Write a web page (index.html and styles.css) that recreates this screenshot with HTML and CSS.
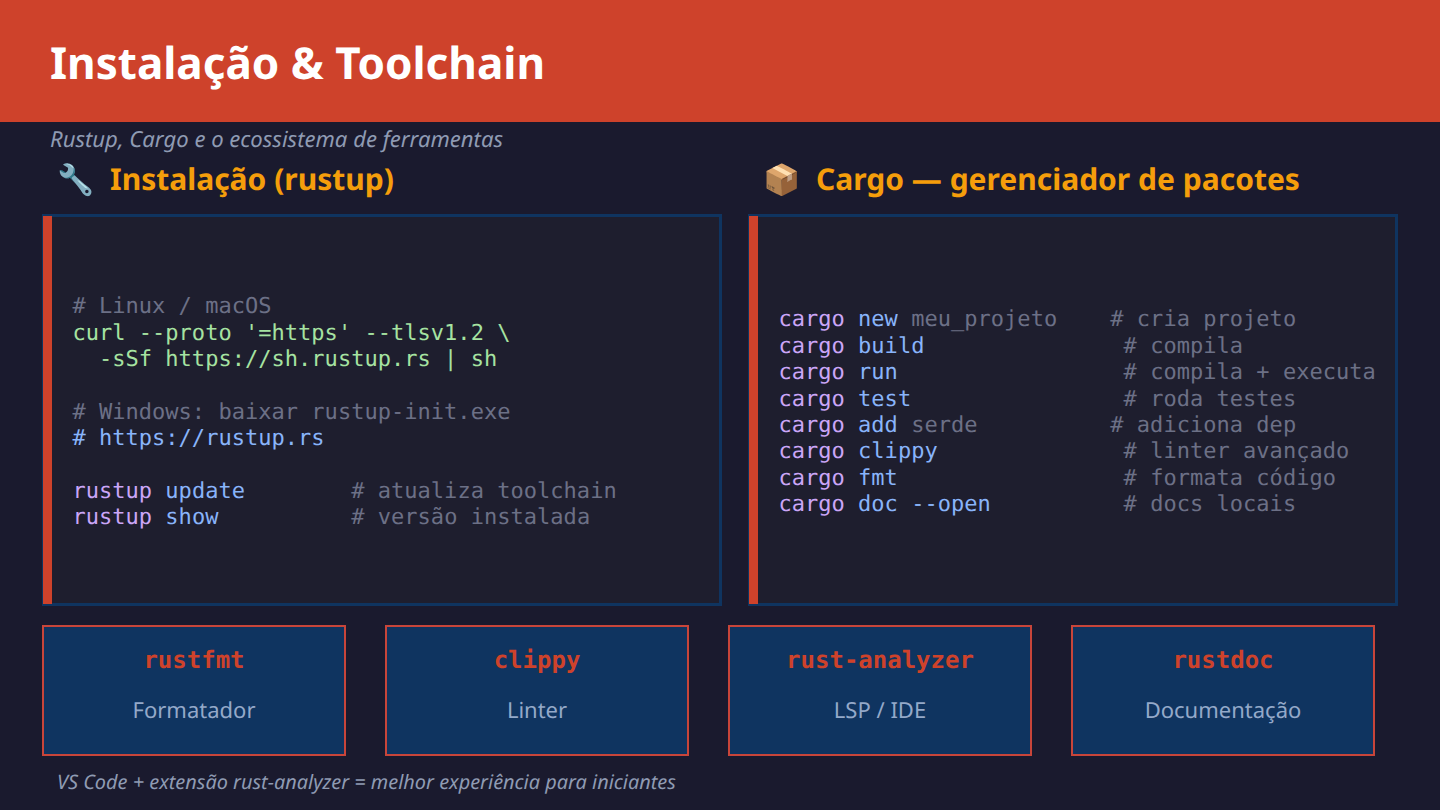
FILE: index.html
```html
<!DOCTYPE html>
<html lang="pt-BR">
<head>
<meta charset="utf-8">
<title>Instalação &amp; Toolchain</title>
<link rel="stylesheet" href="styles.css">
</head>
<body>
<header class="banner"><h1 class="title">Instalação &amp; Toolchain</h1></header>
<p class="subtitle">Rustup, Cargo e o ecossistema de ferramentas</p>
<main class="columns">
  <section class="column">
    <h2 class="heading"><span class="emoji">🔧</span>Instalação (rustup)</h2>
    <div class="panel"><pre class="code"><span class="c"># Linux / macOS</span>
<span class="g">curl --proto '=https' --tlsv1.2 \</span>
<span class="g">  -sSf https://sh.rustup.rs | sh</span>

<span class="c"># Windows: baixar rustup-init.exe</span>
<span class="b"># https://rustup.rs</span>

<span class="p">rustup</span> <span class="b">update</span>        <span class="c"># atualiza toolchain</span>
<span class="p">rustup</span> <span class="b">show</span>          <span class="c"># versão instalada</span></pre></div>
  </section>
  <section class="column">
    <h2 class="heading"><span class="emoji">📦</span>Cargo — gerenciador de pacotes</h2>
    <div class="panel"><pre class="code"><span class="p">cargo</span> <span class="b">new</span> <span class="c">meu_projeto    # cria projeto</span>
<span class="p">cargo</span> <span class="b">build</span>               <span class="c"># compila</span>
<span class="p">cargo</span> <span class="b">run</span>                 <span class="c"># compila + executa</span>
<span class="p">cargo</span> <span class="b">test</span>                <span class="c"># roda testes</span>
<span class="p">cargo</span> <span class="b">add</span> <span class="c">serde          # adiciona dep</span>
<span class="p">cargo</span> <span class="b">clippy</span>              <span class="c"># linter avançado</span>
<span class="p">cargo</span> <span class="b">fmt</span>                 <span class="c"># formata código</span>
<span class="p">cargo</span> <span class="b">doc --open</span>          <span class="c"># docs locais</span></pre></div>
  </section>
</main>
<section class="tools">
  <div class="tool"><div class="tool-name">rustfmt</div><div class="tool-desc">Formatador</div></div>
  <div class="tool"><div class="tool-name">clippy</div><div class="tool-desc">Linter</div></div>
  <div class="tool"><div class="tool-name">rust-analyzer</div><div class="tool-desc">LSP / IDE</div></div>
  <div class="tool"><div class="tool-name">rustdoc</div><div class="tool-desc">Documentação</div></div>
</section>
<p class="note">VS Code + extensão rust-analyzer = melhor experiência para iniciantes</p>
</body>
</html>
```
FILE: styles.css
```css
* { box-sizing: border-box; margin: 0; padding: 0; }
html, body { width: 1440px; height: 810px; overflow: hidden; }
body {
  background: #1a1a2e;
  font-family: "Noto Sans", sans-serif;
  text-rendering: geometricPrecision;
  display: flex;
  flex-direction: column;
}
.banner {
  height: 122px;
  background: #ce422b;
  display: flex;
  align-items: center;
  padding: 2px 0 0 50px;
  flex: none;
}
.title { font-size: 44px; font-weight: 700; color: #fff; line-height: 60px; }
.subtitle {
  font-size: 22.1px;
  font-style: italic;
  color: #8f9bb3;
  line-height: 30px;
  padding: 2px 0 0 50px;
  height: 31px;
  flex: none;
}
.columns {
  display: grid;
  grid-template-columns: 680px 650px;
  column-gap: 26px;
  padding-left: 42px;
  flex: none;
}
.heading {
  font-size: 30px;
  font-weight: 700;
  color: #f59e0b;
  line-height: 40px;
  height: 61px;
  padding: 6px 0 0 15px;
  white-space: nowrap;
}
.emoji { display: inline-block; width: 53px; font-family: "Noto Color Emoji", sans-serif; font-weight: 400; }
.panel {
  position: relative;
  height: 392px;
  background: #1e1e2e;
  border: 3px solid #0f3460;
  display: flex;
  align-items: center;
  padding: 6px 0 0 27.4px;
}
.panel::before {
  content: "";
  position: absolute;
  left: -2px;
  top: -1px;
  bottom: -1px;
  width: 9px;
  background: #ce422b;
}
.code {
  font-family: "DejaVu Sans Mono", monospace;
  font-size: 22px;
  line-height: 26.4px;
  letter-spacing: 0.03px;
  color: #cdd6f4;
}
.c { color: #6c7086; }
.g { color: #a6e3a1; }
.b { color: #89b4fa; }
.p { color: #cba6f7; }
.tools {
  display: flex;
  gap: 39px;
  padding: 19px 0 0 42px;
  flex: none;
}
.tool {
  width: 304px;
  height: 131px;
  background: #0f3460;
  border: 2px solid #c8453a;
  text-align: center;
}
.tool-name {
  font-family: "DejaVu Sans Mono", monospace;
  font-size: 24px;
  font-weight: 700;
  color: #ce422b;
  line-height: 28px;
  padding-top: 19px;
}
.tool-desc { font-size: 22px; color: #94a9c9; line-height: 30px; padding-top: 21px; }
.note {
  font-size: 19.9px;
  font-style: italic;
  color: #8f9bb3;
  line-height: 26px;
  padding: 13px 0 0 57px;
}
```
